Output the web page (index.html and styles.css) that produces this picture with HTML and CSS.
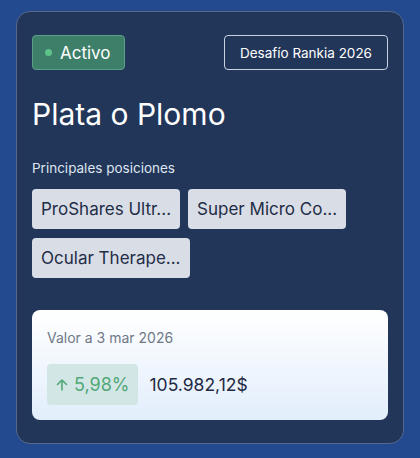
FILE: index.html
```html
<!DOCTYPE html>
<html lang="es">
<head>
  <meta charset="UTF-8">
  <title>Plata o Plomo</title>
  <link rel="stylesheet" href="styles.css">
</head>
<body>
  <div class="card">
    <div class="top">
      <span class="status"><span class="dot"></span>Activo</span>
      <span class="challenge">Desafío Rankia 2026</span>
    </div>

    <h1>Plata o Plomo</h1>

    <div class="label">Principales posiciones</div>
    <div class="chips">
      <span class="chip">ProShares Ultr...</span>
      <span class="chip">Super Micro Co...</span>
      <span class="chip">Ocular Therape...</span>
    </div>

    <div class="value">
      <div class="value-date">Valor a 3 mar 2026</div>
      <div class="value-row">
        <span class="change">
          <svg width="14" height="14" viewBox="0 0 14 14"><path d="M7 12V2M2.5 6.5L7 2l4.5 4.5" fill="none" stroke="currentColor" stroke-width="1.6" stroke-linecap="round" stroke-linejoin="round"/></svg>
          5,98%
        </span>
        <span class="amount">105.982,12$</span>
      </div>
    </div>
  </div>
</body>
</html>
```

FILE: styles.css
```css
body {
  font-family: Inter, 'Noto Sans', sans-serif;
  background: #234a8e;
  margin: 0;
  padding: 11px 16px 15px;
}

.card {
  background: #22365a;
  border: 1px solid #56698c;
  border-radius: 14px;
  padding: 23px 15px 23px;
  color: #fff;
}

.top {
  display: flex;
  justify-content: space-between;
  align-items: center;
}

.status {
  display: flex;
  align-items: center;
  gap: 8px;
  height: 33px;
  padding: 0 13px 0 12px;
  background: #3e7f6a;
  border: 1px solid #5b9e86;
  border-radius: 4px;
  font-size: 17px;
}

.dot {
  width: 7px;
  height: 7px;
  border-radius: 50%;
  background: #5ec38a;
}

.challenge {
  display: flex;
  align-items: center;
  height: 33px;
  padding: 0 15px;
  border: 1px solid #c9d2e2;
  border-radius: 4px;
  font-size: 13.5px;
}

h1 {
  font-size: 30px;
  font-weight: 400;
  margin: 26px 0 0;
  line-height: 36px;
}

.label {
  margin-top: 28px;
  font-size: 13.5px;
  color: #dfe5ef;
}

.chips {
  display: flex;
  flex-wrap: wrap;
  gap: 9px 8px;
  margin-top: 13px;
}

.chip {
  height: 40px;
  line-height: 40px;
  padding: 0 9px;
  background: #d9dde5;
  color: #1f2d48;
  border-radius: 4px;
  font-size: 17px;
}

.value {
  margin-top: 32px;
  background: linear-gradient(#ffffff, #e2eefc);
  border-radius: 8px;
  padding: 19px 15px 15px;
}

.value-date {
  font-size: 14px;
  color: #6f7886;
}

.value-row {
  display: flex;
  align-items: center;
  gap: 12px;
  margin-top: 18px;
}

.change {
  display: flex;
  align-items: center;
  gap: 5px;
  height: 41px;
  padding: 0 8px;
  background: #d3e6e6;
  color: #52a877;
  border-radius: 4px;
  font-size: 18px;
}

.amount {
  font-size: 17.5px;
  color: #1e2a44;
}
```
